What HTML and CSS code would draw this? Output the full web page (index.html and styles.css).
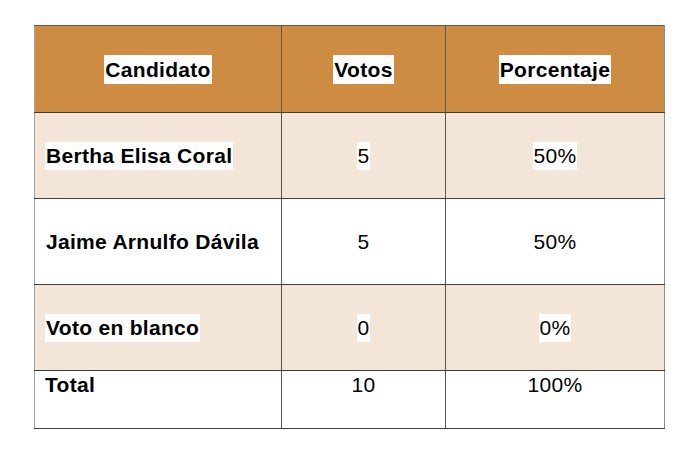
FILE: index.html
```html
<!DOCTYPE html>
<html lang="es">
<head>
<meta charset="utf-8">
<title>Resultados</title>
<link rel="stylesheet" href="styles.css">
</head>
<body>
<div class="page">
  <table class="results">
    <colgroup>
      <col class="c1">
      <col class="c2">
      <col class="c3">
    </colgroup>
    <thead>
      <tr class="head">
        <th><span class="hl">Candidato</span></th>
        <th><span class="hl">Votos</span></th>
        <th><span class="hl">Porcentaje</span></th>
      </tr>
    </thead>
    <tbody>
      <tr class="shade">
        <td class="name"><span class="hl">Bertha Elisa Coral</span></td>
        <td class="num"><span class="hl">5</span></td>
        <td class="num"><span class="hl">50%</span></td>
      </tr>
      <tr class="plain">
        <td class="name"><span class="hl">Jaime Arnulfo Dávila</span></td>
        <td class="num"><span class="hl">5</span></td>
        <td class="num"><span class="hl">50%</span></td>
      </tr>
      <tr class="shade">
        <td class="name"><span class="hl">Voto en blanco</span></td>
        <td class="num"><span class="hl">0</span></td>
        <td class="num"><span class="hl">0%</span></td>
      </tr>
      <tr class="total">
        <td class="name">Total</td>
        <td class="num">10</td>
        <td class="num">100%</td>
      </tr>
    </tbody>
  </table>
</div>
</body>
</html>
```

FILE: styles.css
```css
html, body {
  margin: 0;
  padding: 0;
  background: #ffffff;
}

.page {
  padding: 25px 0 0 34px;
}

.results {
  border-collapse: collapse;
  table-layout: fixed;
  width: 630px;
  font-family: "Liberation Sans", Arial, sans-serif;
  font-size: 21px;
  letter-spacing: 0.3px;
  color: #000;
  border-top: 1px solid #5a5a5a;
  border-bottom: 1px solid #3e3e3e;
  border-left: 1px solid #a0a0a0;
  border-right: 1px solid #8c8c8c;
}

.c1 { width: 247px; }
.c2 { width: 164px; }
.c3 { width: 219px; }

.results th,
.results td {
  padding: 0;
  border-top: 1px solid #3e3e3e;
  border-bottom: 1px solid #3e3e3e;
  border-left: 1px solid #555;
  border-right: 1px solid #555;
  vertical-align: middle;
}

.results tr > :first-child { border-left: 1px solid #a0a0a0; }
.results tr > :last-child { border-right: 1px solid #8c8c8c; }
.results thead th { border-top: 1px solid #5a5a5a; }

.head {
  height: 87px;
  background: #ce8c43;
}

.head th {
  text-align: center;
  font-weight: bold;
}

.shade { height: 86px; background: #f3e5d8; }
.plain { height: 86px; background: #ffffff; }

.total {
  height: 58px;
  background: #ffffff;
}

.total td {
  vertical-align: top;
  padding-top: 2px;
  line-height: 24px;
}

.name {
  text-align: left;
  font-weight: bold;
  padding-left: 10px !important;
}

.num {
  text-align: center;
  font-weight: normal;
}

.hl {
  display: inline-block;
  background: #ffffff;
  line-height: 28px;
  padding: 0 1px;
}

.head .hl {
  line-height: 29px;
}
```
